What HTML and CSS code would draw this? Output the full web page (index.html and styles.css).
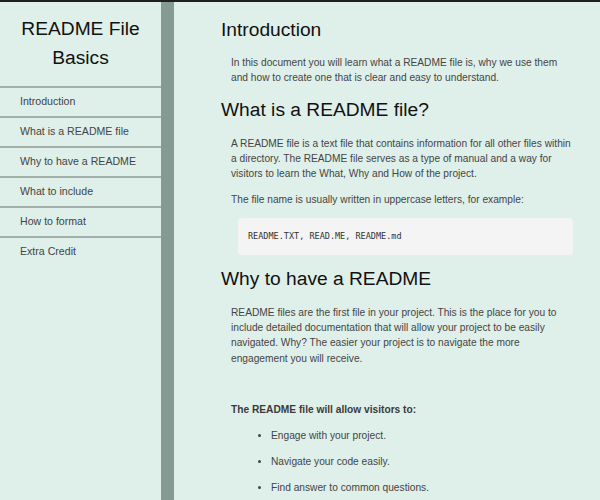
FILE: index.html
```html
<!DOCTYPE html>
<html lang="en">
<head>
<meta charset="utf-8">
<title>README File Basics</title>
<link rel="stylesheet" href="styles.css">
</head>
<body>
<div class="page">
  <nav class="sidebar" id="navbar">
    <header class="sidebar-title">README File Basics</header>
    <ul class="nav-list">
      <li class="nav-item"><a class="nav-link" href="#Introduction">Introduction</a></li>
      <li class="nav-item"><a class="nav-link" href="#What_is_a_README_file">What is a README file</a></li>
      <li class="nav-item"><a class="nav-link" href="#Why_to_have_a_README">Why to have a README</a></li>
      <li class="nav-item"><a class="nav-link" href="#What_to_include">What to include</a></li>
      <li class="nav-item"><a class="nav-link" href="#How_to_format">How to format</a></li>
      <li class="nav-item"><a class="nav-link" href="#Extra_Credit">Extra Credit</a></li>
    </ul>
  </nav>
  <main class="main" id="main-doc">
    <section class="section" id="Introduction">
      <h2 class="section-title">Introduction</h2>
      <div class="section-body">
        <p class="text">In this document you will learn what a README file is, why we use them and how to create one that is clear and easy to understand.</p>
      </div>
    </section>
    <section class="section" id="What_is_a_README_file">
      <h2 class="section-title">What is a README file?</h2>
      <div class="section-body">
        <p class="text">A README file is a text file that contains information for all other files within a directory. The README file serves as a type of manual and a way for visitors to learn the What, Why and How of the project.</p>
        <p class="text">The file name is usually written in uppercase letters, for example:</p>
        <pre class="code-block"><code>README.TXT, READ.ME, README.md</code></pre>
      </div>
    </section>
    <section class="section" id="Why_to_have_a_README">
      <h2 class="section-title">Why to have a README</h2>
      <div class="section-body">
        <p class="text">README files are the first file in your project. This is the place for you to include detailed documentation that will allow your project to be easily navigated. Why? The easier your project is to navigate the more engagement you will receive.</p>
        <p class="text text-strong">The README file will allow visitors to:</p>
        <ul class="bullets">
          <li class="bullet">Engage with your project.</li>
          <li class="bullet">Navigate your code easily.</li>
          <li class="bullet">Find answer to common questions.</li>
        </ul>
      </div>
    </section>
  </main>
</div>
</body>
</html>
```
FILE: styles.css
```css
html, body {
  margin: 0;
  padding: 0;
}

body {
  background: #dfefe9;
  border-top: 2px solid #1f1f1f;
  font-family: "Liberation Sans", Arial, Helvetica, sans-serif;
  color: #444;
}

.page {
  display: flex;
  height: calc(100vh - 2px);
  overflow: hidden;
}

.sidebar {
  flex: 0 0 161px;
  width: 161px;
  border-right: 13px solid #859a92;
  background: #dfefe9;
}

.sidebar-title {
  padding: 13px 0 13.4px;
  font-size: 19.2px;
  line-height: 28.8px;
  text-align: center;
  color: #111;
}

.nav-list {
  list-style: none;
  margin: 0;
  padding: 0;
}

.nav-item {
  border-top: 2px solid #a3b0aa;
}

.nav-link {
  display: block;
  padding: 6px 0 7px 20px;
  font-size: 10.6px;
  line-height: 15px;
  color: #444;
  text-decoration: none;
}

.main {
  flex: 1;
  min-width: 0;
  padding: 3px 25px 0 47px;
  overflow: hidden;
}

.section-title {
  margin: 13.5px 0 14px;
  font-size: 19.2px;
  line-height: 22px;
  font-weight: normal;
  color: #111;
}

.section-body {
  padding-left: 10px;
}

.text {
  margin: 10.24px 0;
  font-size: 10.2px;
  line-height: 15.36px;
  color: #454545;
}

.section-title + .section-body > .text:first-child {
  margin-top: 14.5px;
}

.text-strong {
  margin-top: 36px;
  font-weight: bold;
  color: #3a3a3a;
}

.code-block {
  display: flex;
  align-items: center;
  height: 37px;
  margin: 10.24px 2px 10.24px 7px;
  padding: 0 10px;
  box-sizing: border-box;
  background: #f4f4f4;
  border-radius: 4px;
  font-family: "Liberation Mono", "Courier New", monospace;
  font-size: 8.5px;
  color: #333;
}

.bullets {
  margin: 11px 0 0;
  padding-left: 40px;
}

.bullet {
  margin: 0 0 10.24px;
  font-size: 10.2px;
  line-height: 15.36px;
  color: #454545;
}
```
